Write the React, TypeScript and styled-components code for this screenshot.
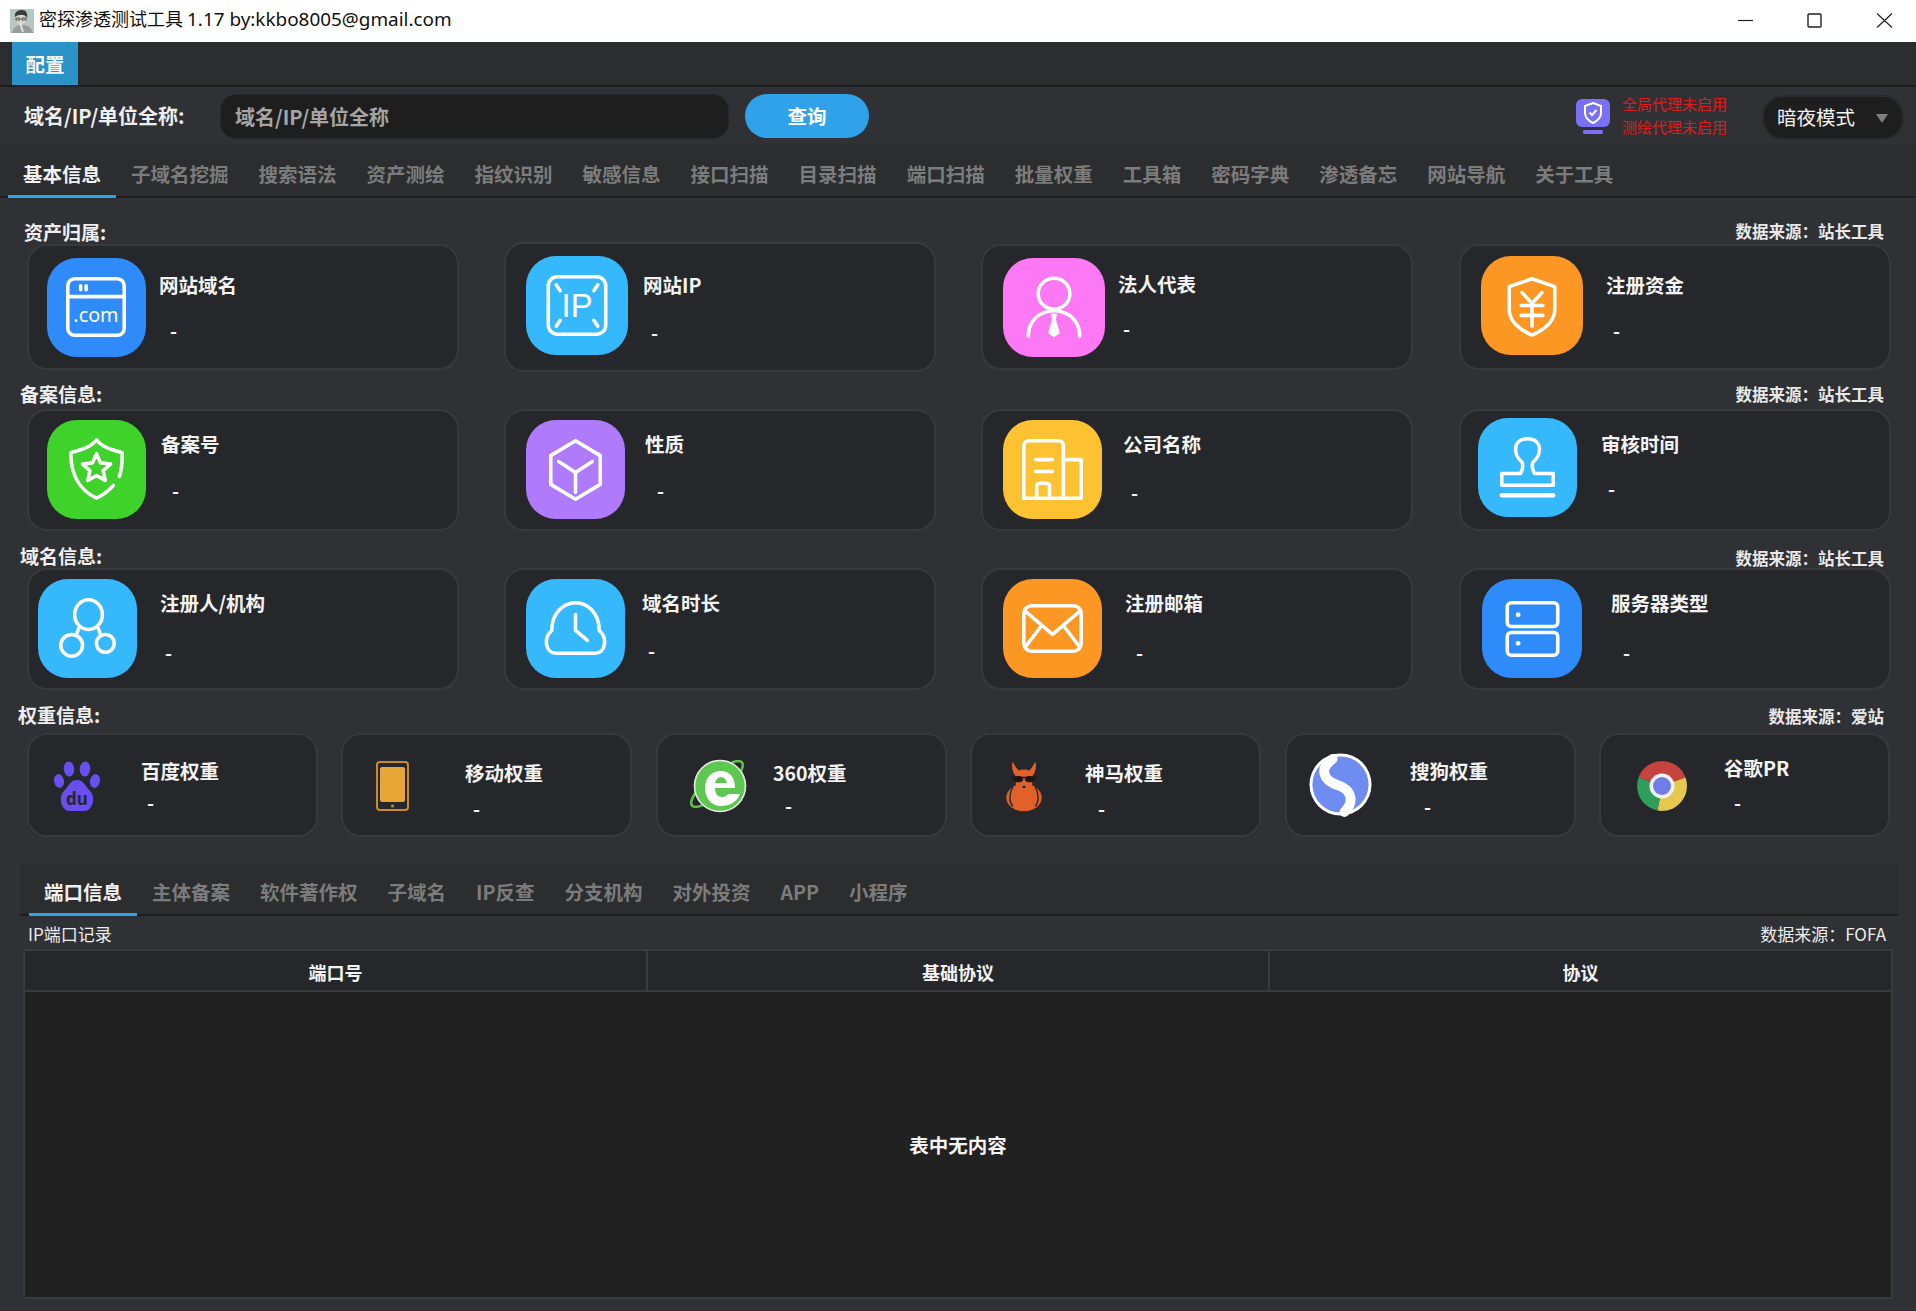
import React from "react";
import styled, { createGlobalStyle } from "styled-components";

const Global = createGlobalStyle`
  html, body { margin: 0; padding: 0; height: 1311px; overflow: hidden; background: #303134; }
  * { box-sizing: border-box; }
  body { font-family: "Noto Sans CJK SC", "Noto Sans", sans-serif; }
`;

const Page = styled.div`
  width: 1916px;
  height: 1311px;
  display: flex;
  flex-direction: column;
  background: #303134;
  color: #fff;
`;

const TitleBar = styled.header`
  height: 42px;
  flex: none;
  background: #fff;
  display: flex;
  align-items: center;
  padding-left: 10px;
  padding-bottom: 1px;
  color: #111;
`;
const TitleText = styled.span`
  margin-left: 5px;
  margin-top: -5px;
  font-size: 18px;
  font-family: "Noto Sans CJK SC", sans-serif;
  font-weight: 400;
  white-space: nowrap;
`;
const TitleLatin = styled.span`
  font-family: "Noto Sans", sans-serif;
  font-size: 18.9px;
`;
const WinControls = styled.div`
  margin-left: auto;
  display: flex;
  align-items: center;
  padding-right: 23px;
  gap: 54px;
`;

const MenuBar = styled.nav`
  height: 45px;
  flex: none;
  background: #2c2d2f;
  border-bottom: 2px solid #1d1e1f;
  padding-left: 12px;
  display: flex;
`;
const MenuButton = styled.div`
  width: 66px;
  height: 43px;
  background: #2a93c8;
  font-size: 19.5px;
  font-weight: 700;
  display: flex;
  align-items: center;
  justify-content: center;
  color: #f4f4f4;
`;

const Toolbar = styled.div`
  height: 57px;
  flex: none;
  background: #303134;
  display: flex;
  align-items: flex-start;
  padding: 7px 12px 0 24px;
`;
const FieldLabel = styled.label`
  width: 196px;
  flex: none;
  height: 45px;
  line-height: 43px;
  font-size: 20px;
  font-weight: 700;
  color: #eee;
  white-space: nowrap;
`;
const SearchInput = styled.div`
  width: 509px;
  height: 45px;
  border-radius: 16px;
  background: #1e1e1e;
  border: 1px solid #26272a;
  color: #a5a5a5;
  font-size: 20px;
  font-weight: 700;
  line-height: 43px;
  padding-left: 14px;
`;
const QueryButton = styled.button`
  margin-left: 16px;
  width: 124px;
  height: 44px;
  border: 0;
  border-radius: 22px;
  background: #2fa2ea;
  color: #fff;
  font: 700 19.5px "Noto Sans CJK SC", sans-serif;
  padding: 0 0 2px;
`;
const ProxyStatus = styled.div`
  margin-left: auto;
  display: flex;
  align-items: center;
  height: 45px;
`;
const ProxyLines = styled.div`
  margin-left: 12px;
  margin-top: -3px;
  width: 140px;
  color: #e01b1b;
  font-size: 15px;
  line-height: 23px;
  white-space: nowrap;
`;
const ThemeSelect = styled.div`
  width: 142px;
  height: 45px;
  margin-top: 1px;
  border-radius: 21px;
  background: #1e1e1e;
  border: 2px solid #2a2b2d;
  color: #f2f2f2;
  font-size: 19.5px;
  display: flex;
  align-items: center;
  justify-content: space-between;
  padding: 0 14px 2px 13px;
`;
const Caret = styled.i`
  width: 0;
  height: 0;
  margin-top: 3px;
  border-left: 6.5px solid transparent;
  border-right: 6.5px solid transparent;
  border-top: 9px solid #808080;
`;

const TabStrip = styled.div<{ $h: number; $pad: number; $left: number }>`
  height: ${(p) => p.$h}px;
  flex: none;
  background: #2c2d2f;
  border-bottom: 2px solid #1d1e1f;
  display: flex;
  padding-left: ${(p) => p.$left}px;
  padding-top: ${(p) => p.$pad}px;
`;
const Tab = styled.div<{ $active?: boolean; $h: number; $lift: number }>`
  height: ${(p) => p.$h}px;
  padding: 0 15px ${(p) => p.$lift}px;
  font-size: 19.5px;
  font-weight: 700;
  display: flex;
  align-items: center;
  white-space: nowrap;
  color: ${(p) => (p.$active ? "#f0f0f0" : "#7c7c7c")};
  border-bottom: 3px solid ${(p) => (p.$active ? "#2fa2ea" : "transparent")};
`;

const SectionHead = styled.div<{ $top: number; $h: number; $left: number }>`
  margin-top: ${(p) => p.$top}px;
  height: ${(p) => p.$h}px;
  padding: 0 32px 3px ${(p) => p.$left}px;
  display: flex;
  align-items: center;
  justify-content: space-between;
  flex: none;
`;
const SectionTitle = styled.span`
  font-size: 19px;
  font-weight: 700;
  color: #eee;
`;
const SourceNote = styled.span<{ $drop: number }>`
  margin-top: ${(p) => p.$drop}px;
  font-size: 16.5px;
  font-weight: 700;
  color: #e8e8e8;
`;
const CardGrid = styled.div<{ $cols: number; $w: number; $gap: number; $h: number }>`
  display: grid;
  grid-template-columns: repeat(${(p) => p.$cols}, ${(p) => p.$w}px);
  column-gap: ${(p) => p.$gap}px;
  height: ${(p) => p.$h}px;
  align-items: center;
  padding-left: 26.5px;
  flex: none;
`;
const Card = styled.div<{ $h: number; $x: number; $y: number }>`
  height: ${(p) => p.$h}px;
  background: #26272a;
  border: 2px solid #38393c;
  border-radius: 20px;
  display: flex;
  align-items: flex-start;
  padding-left: ${(p) => p.$x - 2}px;
  padding-top: ${(p) => p.$y - 2}px;
`;
const IconTile = styled.div<{ $bg: string; $w: number; $h: number }>`
  width: ${(p) => p.$w}px;
  height: ${(p) => p.$h}px;
  flex: none;
  border-radius: 30px;
  background: ${(p) => p.$bg};
  display: flex;
  svg { width: 100%; height: 100%; display: block; }
`;
const LogoBox = styled.div<{ $w: number; $h: number }>`
  width: ${(p) => p.$w}px;
  height: ${(p) => p.$h}px;
  flex: none;
  svg { width: 100%; height: 100%; display: block; overflow: visible; }
`;
const CardText = styled.div<{ $x: number; $y: number }>`
  margin-left: ${(p) => p.$x}px;
  margin-top: ${(p) => p.$y}px;
`;
const CardName = styled.div`
  font-size: 19.5px;
  line-height: 24px;
  height: 24px;
  font-weight: 700;
  color: #f2f2f2;
  white-space: nowrap;
`;
const CardValue = styled.div<{ $x: number; $y: number }>`
  margin-left: ${(p) => p.$x}px;
  margin-top: ${(p) => p.$y}px;
  font-size: 19px;
  line-height: 20px;
  height: 20px;
  font-weight: 700;
  color: #f2f2f2;
`;

const BottomPanel = styled.section`
  margin: 26px 18px 0 20px;
  flex: 1;
  display: flex;
  flex-direction: column;
`;
const RecordHead = styled.div`
  height: 33px;
  flex: none;
  padding: 2px 12px 0 8px;
  font-size: 17px;
  color: #ececec;
  display: flex;
  align-items: center;
  justify-content: space-between;
`;
const DataTable = styled.div`
  margin: 0 5px 0 3px;
  height: 350px;
  flex: none;
  background: #212121;
  border: 2px solid #3a3b3e;
  display: flex;
  flex-direction: column;
`;
const HeadRow = styled.div`
  height: 41px;
  flex: none;
  background: #26272a;
  border-bottom: 2px solid #3a3b3e;
  display: grid;
  grid-template-columns: 621px 1fr 623px;
`;
const HeadCell = styled.div`
  font-size: 18px;
  font-weight: 700;
  color: #f2f2f2;
  display: flex;
  align-items: center;
  justify-content: center;
  padding-top: 3px;
  & + & { border-left: 2px solid #3a3b3e; }
`;
const EmptyState = styled.div`
  flex: 1;
  display: flex;
  align-items: center;
  justify-content: center;
  font-size: 19.5px;
  font-weight: 700;
  color: #f4f4f4;
`;

const S = { fill: "none", stroke: "#fff", strokeWidth: 3.6, strokeLinecap: "round", strokeLinejoin: "round" } as const;

const icons: Record<string, React.ReactNode> = {
  com: (
    <svg viewBox="0 0 100 100"><g {...S}>
      <rect x="21" y="21" width="57" height="57" rx="7" />
      <path d="M21 39H78" />
      <path d="M34 28v4M39.5 28v4" />
    </g><text x="49.5" y="65" textAnchor="middle" fontSize="20" fill="#fff" fontFamily="Noto Sans">.com</text></svg>
  ),
  ip: (
    <svg viewBox="0 0 100 100"><g {...S}>
      <rect x="21" y="21" width="58" height="58" rx="9" />
      <path d="M29 29l4 6M71 29l-4 6M29 71l4-6M71 71l-4-6" />
    </g><text x="50" y="62" textAnchor="middle" fontSize="33" fill="#fff" fontFamily="Liberation Sans">IP</text></svg>
  ),
  person: (
    <svg viewBox="0 0 100 100"><g {...S}>
      <ellipse cx="50" cy="36" rx="16" ry="15.5" />
      <path d="M24 79C24 64 34 54 50 53C66 54 76 64 76 79" />
    </g><path d="M47 56h6l-1 6 4 14-6 4-6-4 4-14z" fill="#fff" /></svg>
  ),
  yen: (
    <svg viewBox="0 0 100 100"><g {...S}>
      <path d="M50 23L73 31V54C73 66 63 74 50 80C37 74 27 66 27 54V31Z" />
      <path d="M40 37L50 48L60 37M39 50H61M39 60H61M50 48V71" />
    </g></svg>
  ),
  badge: (
    <svg viewBox="0 0 100 100"><g {...S}>
      <path d="M73 57C76 50 76 42 76 33C64 30 55 27 50 20C45 27 36 30 24 33C24 60 36 72 50 79C56 76 62 72 67 66" />
      <path d="M50 34L54.1 43.3L64.3 44.4L56.7 51.2L58.8 61.1L50 56L41.2 61.1L43.3 51.2L35.7 44.4L45.9 43.3Z" />
    </g></svg>
  ),
  cube: (
    <svg viewBox="0 0 100 100"><g {...S}>
      <path d="M50 21L75 36V65L50 80L25 65V36Z" />
      <path d="M33 42L50 53L67 42M50 53V73" />
    </g></svg>
  ),
  building: (
    <svg viewBox="0 0 100 100"><g {...S}>
      <path d="M21 79V26C21 23 23 21 26 21H56C59 21 61 23 61 26V79" />
      <path d="M61 40H79V79H21" />
      <path d="M33 40H50M33 52H50" />
      <path d="M34 79V66C34 63 47 63 47 66V79" />
    </g></svg>
  ),
  stamp: (
    <svg viewBox="0 0 100 100"><g {...S}>
      <path d="M44 44C36 38 34 21 50 21C66 21 64 38 56 44C54 47 55 52 57 56H76V68H24V56H43C45 52 46 47 44 44Z" />
      <path d="M24 78H76" strokeWidth="4.4" />
    </g></svg>
  ),
  nodes: (
    <svg viewBox="0 0 100 100"><g {...S}>
      <ellipse cx="51" cy="36" rx="14" ry="15" />
      <circle cx="34" cy="67" r="11" />
      <circle cx="68" cy="65" r="9" />
      <path d="M41 50C40 54 39 55 38 57M61 50C62 54 63 55 64 57" />
    </g></svg>
  ),
  clock: (
    <svg viewBox="0 0 100 100"><g {...S}>
      <path d="M30 75C20 75 17 60 26 52C26 34 38 24 50 24C62 24 74 34 74 52C83 60 80 75 70 75Z" />
      <path d="M50 36V52L62 62" />
    </g></svg>
  ),
  mail: (
    <svg viewBox="0 0 100 100"><g {...S}>
      <rect x="21" y="27" width="58" height="46" rx="8" />
      <path d="M23 33L50 56L77 33M23 68L39 47M77 68L61 47" />
    </g></svg>
  ),
  server: (
    <svg viewBox="0 0 100 100"><g {...S}>
      <rect x="25" y="24" width="51" height="24" rx="4" />
      <rect x="25" y="54" width="51" height="23" rx="4" />
    </g><circle cx="36" cy="36" r="2.4" fill="#fff" /><circle cx="36" cy="65" r="2.4" fill="#fff" /></svg>
  ),
};

const logos: Record<string, React.ReactNode> = {
  baidu: (
    <svg viewBox="0 0 46 50">
      <g fill="#694ff0">
        <ellipse cx="15" cy="8" rx="5.2" ry="7.6" transform="rotate(-5 15 8)" />
        <ellipse cx="31" cy="8" rx="5.2" ry="7.6" transform="rotate(5 31 8)" />
        <ellipse cx="5" cy="20" rx="5" ry="7" transform="rotate(-12 5 20)" />
        <ellipse cx="41" cy="20" rx="5" ry="7" transform="rotate(12 41 20)" />
        <path d="M23 19C30 19 31 25 36 30C42 36 39 50 30 50H16C7 50 4 36 10 30C15 25 16 19 23 19Z" />
      </g>
      <text x="23" y="44" textAnchor="middle" fontSize="17" fontWeight="700" fill="#26272a" fontFamily="Noto Sans">du</text>
    </svg>
  ),
  phone: (
    <svg viewBox="0 0 33 50">
      <rect x="1" y="1" width="31" height="48" rx="3" fill="#26272a" stroke="#c98a2c" strokeWidth="2" />
      <rect x="4" y="6" width="25" height="35" rx="2" fill="#e8a636" />
      <circle cx="16.5" cy="45" r="1.6" fill="#c98a2c" />
    </svg>
  ),
  ie: (
    <svg viewBox="0 0 56 54">
      <ellipse cx="26" cy="25" rx="33" ry="10" transform="rotate(-41 26 25)" fill="none" stroke="#5cc24a" strokeWidth="2.6" />
      <circle cx="29" cy="27" r="25.5" fill="#5cc84f" stroke="#e9e9e9" strokeWidth="1.6" />
      <path d="M14 29C14 18 21 12 30 12C39 12 44 19 44 29Z" fill="#fff" />
      <path d="M24 24H36C35 20 33 18 30 18C27 18 25 20 24 24Z" fill="#5cc84f" />
      <path d="M14 29H24C24 35 27 38 31 38C34 38 36 37 37 35H49C46 43 39 47 30 47C20 47 14 39 14 29Z" fill="#fff" />
    </svg>
  ),
  fox: (
    <svg viewBox="0 0 38 52">
      <path d="M7 1C5 6 7 12 10 16H27C30 12 32 6 30 1C28 5 26 8 24 10H13C11 8 9 5 7 1Z" fill="#e0622a" />
      <rect x="10" y="9" width="17" height="24" rx="7" fill="#e0622a" />
      <ellipse cx="18.5" cy="38" rx="18.2" ry="14" fill="#e0622a" />
      <rect x="5" y="16.5" width="27" height="1.6" fill="#1e1612" />
      <ellipse cx="12.5" cy="19" rx="5" ry="3.2" fill="#1e1612" />
      <ellipse cx="24.5" cy="19" rx="5" ry="3.2" fill="#1e1612" />
      <path d="M16.5 26h4l-2 2.5z" fill="#1e1612" />
      <path d="M7 27C3 34 3 42 7 47M30 27C34 34 34 42 30 47" fill="none" stroke="#26272a" strokeWidth="1.4" />
    </svg>
  ),
  sogou: (
    <svg viewBox="0 0 64 64">
      <circle cx="32" cy="32" r="31.5" fill="#fff" />
      <circle cx="32" cy="32" r="28.5" fill="#6f8cf0" />
      <path d="M24 6C10 16 14 28 30 33C44 38 46 50 36 60" fill="none" stroke="#fff" strokeWidth="10" strokeLinecap="round" />
    </svg>
  ),
  chrome: (
    <svg viewBox="0 0 100 100">
      <path d="M50 50L3 33A50 50 0 0 1 97 33Z" fill="#c6433f" />
      <path d="M50 50L97 33A50 50 0 0 1 41 99Z" fill="#e6c84f" />
      <path d="M50 50L41 99A50 50 0 0 1 3 33Z" fill="#2f9d5b" />
      <circle cx="50" cy="50" r="25" fill="#f1f1f1" />
      <circle cx="50" cy="50" r="18" fill="#6f7de8" />
    </svg>
  ),
};

type Spec = {
  name: string; icon?: string; bg?: string; logo?: string;
  ix0: number; ix1: number; iy0: number; iy1: number; nx: number; ny: number; vx: number; vy: number;
};
type RowSpec = {
  title: string; source: string; left: number; top: number; headH: number; drop: number;
  rowH: number; cardH: number[]; cardY: number[]; cols: number; w: number; gap: number; specs: Spec[];
};

const rows: RowSpec[] = [
  {
    title: "资产归属:", source: "数据来源：站长工具", left: 24, top: 25, headH: 19, drop: 0, rowH: 130,
    cardH: [126, 130, 126, 126], cardY: [244, 242, 244, 244], cols: 4, w: 432, gap: 45.4,
    specs: [
      { name: "网站域名", icon: "com", bg: "#2f8bfa", ix0: 47, ix1: 146, iy0: 258, iy1: 357, nx: 159, ny: 286, vx: 170, vy: 332 },
      { name: "网站IP", icon: "ip", bg: "#36b8fd", ix0: 526, ix1: 628, iy0: 256, iy1: 355, nx: 643, ny: 286, vx: 651, vy: 334 },
      { name: "法人代表", icon: "person", bg: "#fd78f5", ix0: 1003, ix1: 1105, iy0: 258, iy1: 357, nx: 1118, ny: 285, vx: 1123, vy: 330 },
      { name: "注册资金", icon: "yen", bg: "#fc9723", ix0: 1481, ix1: 1583, iy0: 256, iy1: 355, nx: 1606, ny: 286, vx: 1613, vy: 332 },
    ],
  },
  {
    title: "备案信息:", source: "数据来源：站长工具", left: 20, top: 8, headH: 29, drop: 2, rowH: 122,
    cardH: [122, 122, 122, 122], cardY: [409, 409, 409, 409], cols: 4, w: 432, gap: 45.4,
    specs: [
      { name: "备案号", icon: "badge", bg: "#3fd22a", ix0: 47, ix1: 146, iy0: 420, iy1: 519, nx: 161, ny: 445, vx: 172, vy: 492 },
      { name: "性质", icon: "cube", bg: "#af7bfc", ix0: 526, ix1: 625, iy0: 420, iy1: 519, nx: 645, ny: 445, vx: 657, vy: 492 },
      { name: "公司名称", icon: "building", bg: "#fdc232", ix0: 1003, ix1: 1102, iy0: 420, iy1: 519, nx: 1123, ny: 445, vx: 1131, vy: 494 },
      { name: "审核时间", icon: "stamp", bg: "#36b8fd", ix0: 1478, ix1: 1577, iy0: 418, iy1: 517, nx: 1601, ny: 445, vx: 1608, vy: 490 },
    ],
  },
  {
    title: "域名信息:", source: "数据来源：站长工具", left: 20, top: 14, headH: 23, drop: 6, rowH: 122,
    cardH: [122, 122, 122, 122], cardY: [568, 568, 568, 568], cols: 4, w: 432, gap: 45.4,
    specs: [
      { name: "注册人/机构", icon: "nodes", bg: "#36b8fd", ix0: 38, ix1: 137, iy0: 579, iy1: 678, nx: 160, ny: 604, vx: 165, vy: 654 },
      { name: "域名时长", icon: "clock", bg: "#36b8fd", ix0: 526, ix1: 625, iy0: 579, iy1: 678, nx: 642, ny: 604, vx: 648, vy: 652 },
      { name: "注册邮箱", icon: "mail", bg: "#fc9723", ix0: 1003, ix1: 1102, iy0: 579, iy1: 678, nx: 1125, ny: 604, vx: 1136, vy: 654 },
      { name: "服务器类型", icon: "server", bg: "#2f8bfa", ix0: 1482, ix1: 1582, iy0: 579, iy1: 678, nx: 1611, ny: 604, vx: 1623, vy: 654 },
    ],
  },
  {
    title: "权重信息:", source: "数据来源：爱站", left: 18, top: 8, headH: 35, drop: 4, rowH: 104,
    cardH: [104, 104, 104, 104, 104, 104], cardY: [733, 733, 733, 733, 733, 733], cols: 6, w: 291, gap: 23.5,
    specs: [
      { name: "百度权重", logo: "baidu", ix0: 54, ix1: 100, iy0: 761, iy1: 811, nx: 141, ny: 772, vx: 147, vy: 804 },
      { name: "移动权重", logo: "phone", ix0: 376, ix1: 409, iy0: 761, iy1: 811, nx: 465, ny: 774, vx: 473, vy: 810 },
      { name: "360权重", logo: "ie", ix0: 691, ix1: 747, iy0: 759, iy1: 813, nx: 773, ny: 774, vx: 785, vy: 807 },
      { name: "神马权重", logo: "fox", ix0: 1006, ix1: 1043, iy0: 760, iy1: 812, nx: 1085, ny: 774, vx: 1098, vy: 810 },
      { name: "搜狗权重", logo: "sogou", ix0: 1309, ix1: 1372, iy0: 753, iy1: 816, nx: 1410, ny: 772, vx: 1424, vy: 808 },
      { name: "谷歌PR", logo: "chrome", ix0: 1637, ix1: 1687, iy0: 761, iy1: 811, nx: 1724, ny: 769, vx: 1734, vy: 804 },
    ],
  },
];

const mainTabs = ["基本信息", "子域名挖掘", "搜索语法", "资产测绘", "指纹识别", "敏感信息", "接口扫描", "目录扫描", "端口扫描", "批量权重", "工具箱", "密码字典", "渗透备忘", "网站导航", "关于工具"];
const subTabs = ["端口信息", "主体备案", "软件著作权", "子域名", "IP反查", "分支机构", "对外投资", "APP", "小程序"];

function InfoCard({ s, x, y, h }: { s: Spec; x: number; y: number; h: number }) {
  const w = s.ix1 - s.ix0;
  const ih = s.iy1 - s.iy0;
  return (
    <Card $h={h} $x={s.ix0 - x} $y={s.iy0 - y}>
      {s.icon ? (
        <IconTile $bg={s.bg!} $w={w} $h={ih}>{icons[s.icon]}</IconTile>
      ) : (
        <LogoBox $w={w} $h={ih}>{logos[s.logo!]}</LogoBox>
      )}
      <CardText $x={s.nx - s.ix1} $y={s.ny - 13.5 - s.iy0}>
        <CardName>{s.name}</CardName>
        <CardValue $x={s.vx - s.nx} $y={s.vy - s.ny - 22.5}>-</CardValue>
      </CardText>
    </Card>
  );
}

export default function App() {
  return (
    <Page>
      <Global />
      <TitleBar>
        <svg width="24" height="24" viewBox="0 0 24 24">
          <rect width="24" height="24" fill="#b5c7c1" />
          <path d="M2 24C3 18 7 16 12 16C18 16 21 18 23 24Z" fill="#9a9c9b" />
          <ellipse cx="11" cy="9" rx="5.5" ry="6.5" fill="#d8d2c8" />
          <path d="M5 8C4 2 9 1 12 1C16 1 18 4 17 9C15 5 9 5 5 8Z" fill="#3a3a3a" />
          <path d="M6 9h4v2H6zM12 9h4v2h-4z" fill="none" stroke="#333" strokeWidth="0.8" />
          <path d="M10 14L13 23" stroke="#eee" strokeWidth="1.6" />
        </svg>
        <TitleText>密探渗透测试工具 <TitleLatin>1.17 by:kkbo8005@gmail.com</TitleLatin></TitleText>
        <WinControls>
          <svg width="15" height="15" viewBox="0 0 15 15"><path d="M0 7.5H15" stroke="#222" strokeWidth="1.2" /></svg>
          <svg width="15" height="15" viewBox="0 0 15 15"><rect x="1" y="1" width="13" height="13" rx="1" fill="none" stroke="#222" strokeWidth="1.4" /></svg>
          <svg width="17" height="15" viewBox="0 0 17 15"><path d="M1 0.5L16 14.5M16 0.5L1 14.5" stroke="#222" strokeWidth="1.2" /></svg>
        </WinControls>
      </TitleBar>

      <MenuBar><MenuButton>配置</MenuButton></MenuBar>

      <Toolbar>
        <FieldLabel>域名/IP/单位全称:</FieldLabel>
        <SearchInput>域名/IP/单位全称</SearchInput>
        <QueryButton>查询</QueryButton>
        <ProxyStatus>
          <svg width="34" height="36" viewBox="0 0 34 36">
            <rect width="34" height="28" rx="6" fill="#7a70f5" />
            <rect x="7" y="31" width="20" height="4" rx="1.5" fill="#7a70f5" />
            <path d="M17 4L25 7V14C25 19 21 22 17 24C13 22 9 19 9 14V7Z" fill="none" stroke="#fff" strokeWidth="2" />
            <path d="M13.5 13.5L16 16L20.5 11" fill="none" stroke="#fff" strokeWidth="2" />
          </svg>
          <ProxyLines>全局代理未启用<br />测绘代理未启用</ProxyLines>
        </ProxyStatus>
        <ThemeSelect>暗夜模式<Caret /></ThemeSelect>
      </Toolbar>

      <TabStrip $h={54} $pad={9} $left={8}>
        {mainTabs.map((t, i) => (
          <Tab key={t} $active={i === 0} $h={45} $lift={2}>{t}</Tab>
        ))}
      </TabStrip>

      {rows.map((r) => (
        <React.Fragment key={r.title}>
          <SectionHead $top={r.top} $h={r.headH} $left={r.left}>
            <SectionTitle>{r.title}</SectionTitle>
            <SourceNote $drop={r.drop}>{r.source}</SourceNote>
          </SectionHead>
          <CardGrid $cols={r.cols} $w={r.w} $gap={r.gap} $h={r.rowH}>
            {r.specs.map((s, i) => (
              <InfoCard key={s.name} s={s} x={26.5 + i * (r.w + r.gap)} y={r.cardY[i]} h={r.cardH[i]} />
            ))}
          </CardGrid>
        </React.Fragment>
      ))}

      <BottomPanel>
        <TabStrip $h={53} $pad={12} $left={9}>
          {subTabs.map((t, i) => (
            <Tab key={t} $active={i === 0} $h={41} $lift={5}>{t}</Tab>
          ))}
        </TabStrip>
        <RecordHead>
          <span>IP端口记录</span>
          <span>数据来源：FOFA</span>
        </RecordHead>
        <DataTable>
          <HeadRow>
            <HeadCell>端口号</HeadCell>
            <HeadCell>基础协议</HeadCell>
            <HeadCell>协议</HeadCell>
          </HeadRow>
          <EmptyState>表中无内容</EmptyState>
        </DataTable>
      </BottomPanel>
    </Page>
  );
}
